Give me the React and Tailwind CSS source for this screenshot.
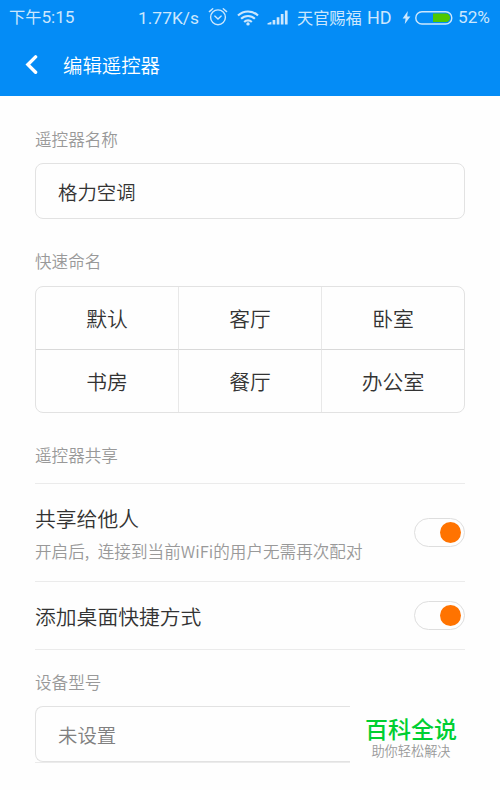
import { useState } from "react";

const ROOMS = ["默认", "客厅", "卧室", "书房", "餐厅", "办公室"];

function AlarmIcon() {
  return (
    <svg width="20" height="20" viewBox="0 0 20 20" fill="none" stroke="currentColor" strokeWidth="1.4" strokeLinecap="round">
      <circle cx="10" cy="9.3" r="7.4" />
      <path d="M6.8 8.1 10 11l3.2-2.9" />
      <path d="M1.4 3.6 4.7.8M18.6 3.6 15.3.8" />
    </svg>
  );
}

function WifiIcon() {
  return (
    <svg width="22" height="17" viewBox="0 0 22 17" fill="none" stroke="currentColor" strokeWidth="2.1">
      <path d="M1 5.6a14.2 14.2 0 0 1 20 0" />
      <path d="M4.1 8.8a9.8 9.8 0 0 1 13.8 0" />
      <path d="M7.2 11.9a5.4 5.4 0 0 1 7.6 0" />
      <circle cx="11" cy="13.9" r="1.7" fill="currentColor" stroke="none" />
    </svg>
  );
}

function SignalIcon() {
  return (
    <svg width="22" height="16" viewBox="0 0 22 16" fill="currentColor">
      <path d="M0.5 14.4v-1.2L4.4 11.8v2.6zM5.6 10h2.7v4.4H5.6zM9.7 7.2h2.7v7.2H9.7zM13.8 4h2.7v10.4h-2.7zM17.9 0.4h2.7v14h-2.7z" />
    </svg>
  );
}

function BatteryIcon() {
  return (
    <svg width="38" height="15" viewBox="0 0 38 15">
      <path d="M18 2.6h13a4 4 0 0 1 4 4.2a4 4 0 0 1-4 4.2H18z" fill="#4fc800" />
      <rect x="0.8" y="0.8" width="36" height="12.2" rx="6.1" fill="none" stroke="currentColor" strokeWidth="1.4" />
    </svg>
  );
}

function StatusBar() {
  return (
    <div className="flex h-[35px] items-center pt-px pl-[9px] font-[Roboto,'Noto_Sans_CJK_SC',sans-serif] text-[17.2px] font-normal whitespace-nowrap text-[#cce7fd]">
      <div className="w-[129px]">
        <span className="text-[16.2px]">下午</span>5:15
      </div>
      <div className="w-[70px] text-[17.4px]">1.77K/s</div>
      <div className="flex w-[89px] items-center justify-between pr-2">
        <AlarmIcon />
        <WifiIcon />
        <SignalIcon />
      </div>
      <div className="w-[105px]">
        <span className="text-[16.2px]">天官赐福</span> <span className="ml-px text-[18px]">HD</span>
      </div>
      <svg className="mr-1" width="9" height="14" viewBox="0 0 9 14" fill="currentColor">
        <path d="M5.8 0 .6 7.4h3L2.8 13l5.6-7.6H5.2z" />
      </svg>
      <BatteryIcon />
      <span className="ml-[5px]">52%</span>
    </div>
  );
}

function SectionLabel({ children }) {
  return <h2 className="text-[16.6px] leading-6 text-[#999]">{children}</h2>;
}

function Toggle({ checked, onChange, label }) {
  return (
    <button
      type="button"
      role="switch"
      aria-checked={checked}
      aria-label={label}
      onClick={() => onChange(!checked)}
      className={`flex h-[29px] w-[51.5px] shrink-0 items-center rounded-full border border-[#dedede] px-[3px] ${checked ? "justify-end" : "justify-start"}`}
    >
      <span className={`size-[21px] rounded-full ${checked ? "bg-[#ff7300]" : "bg-[#ccc]"}`} />
    </button>
  );
}

export default function App() {
  const [name, setName] = useState("格力空调");
  const [shared, setShared] = useState(true);
  const [shortcut, setShortcut] = useState(true);

  return (
    <div className="h-[790px] w-[500px] overflow-hidden bg-[#fefefe] font-['Noto_Sans_CJK_SC',sans-serif] font-[350] text-[#333]">
      <header className="h-24 bg-[#048cf6] text-white">
        <StatusBar />
        <div className="flex h-[59px] items-center pl-[25px]">
          <svg width="13" height="20" viewBox="0 0 13 20" fill="none" stroke="currentColor" strokeWidth="3.4" strokeLinecap="round">
            <path d="M10.6 1.9 2.9 9.6l7.7 7.7" />
          </svg>
          <h1 className="ml-[25px] text-[19.4px]">编辑遥控器</h1>
        </div>
      </header>

      <main className="px-[35px] pt-[31px]">
        <SectionLabel>遥控器名称</SectionLabel>
        <input
          value={name}
          onChange={(e) => setName(e.target.value)}
          className="mt-3 block h-14 w-full rounded-lg border border-[#e2e2e2] px-[22px] text-[19.4px] outline-none"
        />

        <div className="mt-[30px]">
          <SectionLabel>快速命名</SectionLabel>
        </div>
        <div className="mt-[13px] grid h-[127px] grid-cols-[143px_143px_1fr] grid-rows-2 overflow-hidden rounded-lg border border-[#e2e2e2]">
          {ROOMS.map((room, i) => (
            <button
              key={room}
              type="button"
              onClick={() => setName(room)}
              className={`pt-0.5 text-[20.8px] ${i % 3 < 2 ? "border-r border-r-[#e8e8e8]" : ""} ${i < 3 ? "border-b border-b-[#d9d9d9]" : ""}`}
            >
              {room}
            </button>
          ))}
        </div>

        <div className="mt-[30px]">
          <SectionLabel>遥控器共享</SectionLabel>
        </div>
        <div className="mt-4 flex h-[98px] items-center justify-between border-t border-[#ebebeb]">
          <div className="pt-[3px]">
            <div className="text-[20.8px] leading-[33px]">共享给他人</div>
            <div className="text-[16.6px] leading-8 text-[#999]">
              开启后<span className="inline-block w-[13px]">,</span>连接到当前WiFi的用户无需再次配对
            </div>
          </div>
          <Toggle checked={shared} onChange={setShared} label="共享给他人" />
        </div>
        <div className="flex h-[69px] items-center justify-between border-y border-[#ebebeb]">
          <div className="pt-0.5 text-[20.8px]">添加桌面快捷方式</div>
          <Toggle checked={shortcut} onChange={setShortcut} label="添加桌面快捷方式" />
        </div>

        <div className="mt-5">
          <SectionLabel>设备型号</SectionLabel>
        </div>
        <div className="mt-3 flex">
          <div className="w-[315px] border-b border-[#ebebeb]">
            <div className="flex h-14 items-center rounded-l-lg border border-r-0 border-[#e2e2e2] pt-0.5 pl-[22px] text-[19.4px] text-[#808080]">
              未设置
            </div>
          </div>
          <div className="flex flex-1 flex-col items-center pt-2 pl-[7px] whitespace-nowrap">
            <div className="text-[23px] leading-[29px] font-medium text-[#00cf32]">百科全说</div>
            <div className="text-[13.2px] leading-4 text-[#999]">助你轻松解决</div>
          </div>
        </div>
      </main>
    </div>
  );
}
